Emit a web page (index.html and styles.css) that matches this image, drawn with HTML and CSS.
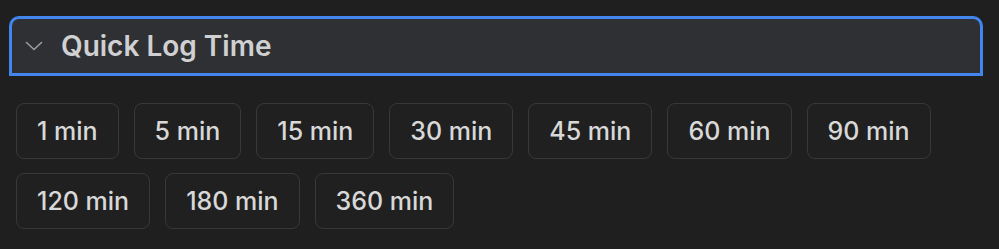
FILE: index.html
```html
<!DOCTYPE html>
<html lang="en">
<head>
<meta charset="utf-8">
<title>Quick Log Time</title>
<link rel="stylesheet" href="styles.css">
</head>
<body>
<section class="panel">
  <button class="panel-header" type="button">
    <svg class="chevron" width="18" height="10" viewBox="0 0 18 10" aria-hidden="true">
      <path d="M1.5 1.5 L9 8.5 L16.5 1.5" fill="none" stroke="#9c9da1" stroke-width="1.6" stroke-linecap="round" stroke-linejoin="round"/>
    </svg>
    <span class="panel-title">Quick Log Time</span>
  </button>
  <div class="chips">
    <button class="chip" type="button">1 min</button>
    <button class="chip" type="button">5 min</button>
    <button class="chip" type="button">15 min</button>
    <button class="chip" type="button">30 min</button>
    <button class="chip" type="button">45 min</button>
    <button class="chip" type="button">60 min</button>
    <button class="chip" type="button">90 min</button>
    <button class="chip" type="button">120 min</button>
    <button class="chip" type="button">180 min</button>
    <button class="chip" type="button">360 min</button>
  </div>
</section>
</body>
</html>
```

FILE: styles.css
```css
* { box-sizing: border-box; }
html, body {
  margin: 0;
  background: #1f1f1f;
}
body {
  font-family: Inter, "Noto Sans", "Liberation Sans", sans-serif;
  color: #d6d6d6;
}
.panel {
  padding: 16px 16px 0 9px;
}
.panel-header {
  display: flex;
  align-items: center;
  width: 100%;
  height: 60px;
  margin: 0;
  padding: 0 0 0 13px;
  background: #2f3034;
  border: 3px solid #4285ee;
  border-radius: 10px 10px 0 0;
  font: inherit;
  color: #d2d2d4;
  text-align: left;
  cursor: pointer;
}
.chevron {
  flex: none;
  display: block;
}
.panel-title {
  margin-left: 18px;
  font-size: 28px;
  font-weight: 600;
  color: #d0d0d2;
}
.chips {
  display: flex;
  flex-wrap: wrap;
  gap: 14px 15px;
  padding: 27px 0 0 7px;
  max-width: 940px;
}
.chip {
  height: 56px;
  margin: 0;
  padding: 0 20px;
  background: #202020;
  border: 1px solid #383838;
  border-radius: 8px;
  font-family: inherit;
  font-size: 25px;
  font-weight: 500;
  color: #d8d8d8;
  cursor: pointer;
}
```
